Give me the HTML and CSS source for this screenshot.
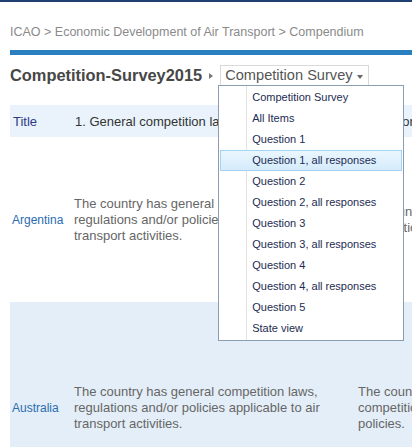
FILE: index.html
```html
<!DOCTYPE html>
<html lang="en">
<head>
  <meta charset="UTF-8">
  <title>Competition-Survey2015</title>
  <link rel="stylesheet" href="styles.css">
</head>
<body>
  <div class="topbar"></div>

  <div class="page">
    <div class="crumbs">ICAO &gt; Economic Development of Air Transport &gt; Compendium</div>
    <div class="rule"></div>

    <div class="titlebar">
      <h1>Competition-Survey2015</h1>
      <span class="sep"></span>
      <div class="viewpicker">
        <div class="picker-btn">Competition Survey <span class="caret"></span></div>
        <ul class="menu">
          <li>Competition Survey</li>
          <li>All Items</li>
          <li>Question 1</li>
          <li class="active">Question 1, all responses</li>
          <li>Question 2</li>
          <li>Question 2, all responses</li>
          <li>Question 3</li>
          <li>Question 3, all responses</li>
          <li>Question 4</li>
          <li>Question 4, all responses</li>
          <li>Question 5</li>
          <li>State view</li>
        </ul>
      </div>
    </div>

    <table class="grid">
      <colgroup>
        <col class="c-name">
        <col class="c-q">
        <col class="c-q">
      </colgroup>
      <tr class="head">
        <th class="th-title">Title</th>
        <th>1. General competition laws</th>
        <th>2. Section on air transport</th>
      </tr>
      <tr class="row-ar">
        <td class="state">Argentina</td>
        <td>The country has general competition laws, regulations and/or policies applicable to air transport activities.</td>
        <td>The country has transport-sector specific competition laws.</td>
      </tr>
      <tr class="row-au alt">
        <td class="state">Australia</td>
        <td>The country has general competition laws, regulations and/or policies applicable to air transport activities.</td>
        <td>The country has transport-sector specific competition laws, rules, regulations and/or policies.</td>
      </tr>
    </table>
  </div>
</body>
</html>
```

FILE: styles.css
```css
* {
  box-sizing: border-box;
}

body {
  margin: 0;
  font-family: "Liberation Sans", Arial, sans-serif;
  background: #fff;
  overflow: hidden;
}

.topbar {
  height: 2px;
  background: #1f3f70;
}

.page {
  padding-left: 10px;
}

.crumbs {
  margin-top: 22px;
  font-size: 12.5px;
  line-height: 16px;
  color: #8a8a8a;
}

.rule {
  margin-top: 10px;
  height: 5px;
  background: #2a7fc0;
}

.titlebar {
  margin-top: 10px;
  height: 21px;
  display: flex;
  align-items: center;
}

h1 {
  margin: 0;
  font-size: 16.4px;
  font-weight: bold;
  color: #474747;
}

.sep {
  width: 0;
  height: 0;
  margin: 0 7px 0 7px;
  border-left: 4px solid #777;
  border-top: 3.5px solid transparent;
  border-bottom: 3.5px solid transparent;
}

.viewpicker {
  position: relative;
}

.picker-btn {
  height: 21px;
  padding: 0 5px 0 4px;
  border: 1px solid #d9d9d9;
  font-size: 14.6px;
  line-height: 19px;
  color: #555;
  display: flex;
  align-items: center;
  white-space: nowrap;
}

.caret {
  width: 0;
  height: 0;
  margin-left: 4px;
  margin-top: 2px;
  border-top: 4px solid #666;
  border-left: 3.5px solid transparent;
  border-right: 3.5px solid transparent;
}

.menu {
  position: absolute;
  top: 20px;
  left: -2px;
  z-index: 10;
  width: 186px;
  margin: 0;
  padding: 1px;
  list-style: none;
  background: #fff;
  border: 1px solid #8c9db1;
}

.menu::before {
  content: "";
  position: absolute;
  top: 0;
  bottom: 0;
  left: 27px;
  width: 1px;
  background: #e2e3e3;
}

.menu li {
  position: relative;
  height: 21px;
  line-height: 19px;
  padding-left: 31px;
  border: 1px solid transparent;
  font-size: 11px;
  color: #1c2c52;
  white-space: nowrap;
}

.menu li.active {
  background: linear-gradient(#eaf6fe, #d5ecfc);
  border-color: #a4d2f3;
}

.grid {
  margin-top: 19px;
  border-collapse: collapse;
  table-layout: fixed;
  width: 630px;
}

.c-name {
  width: 62px;
}

.c-q {
  width: 284px;
}

.grid th {
  height: 32px;
  padding: 0 4px 0 3px;
  text-align: left;
  font-weight: normal;
  font-size: 13px;
  color: #333;
  white-space: nowrap;
  overflow: hidden;
}

.grid .head {
  background: #eaf3fb;
}

.grid .th-title {
  color: #2d3b86;
}

.grid td {
  padding: 0 4px 0 2px;
  font-size: 13px;
  line-height: 16px;
  color: #666;
  vertical-align: middle;
}

.grid td.state {
  font-size: 12px;
  color: #2b6cb0;
}

.row-ar {
  height: 165px;
}

.row-au {
  height: 212px;
}

.alt {
  background: #e4eef8;
}
```
